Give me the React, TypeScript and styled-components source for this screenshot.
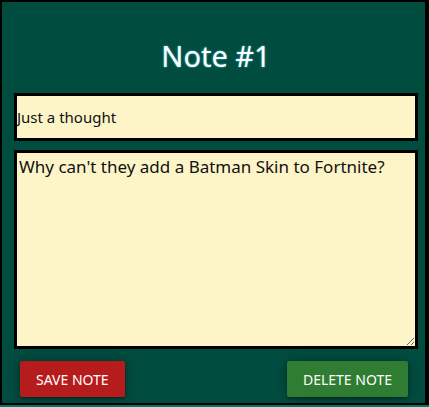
import React from "react";
import styled, { createGlobalStyle } from "styled-components";

const GlobalStyle = createGlobalStyle`
  html, body {
    margin: 0;
    padding: 0;
    background: #00796b;
    height: 407px;
    overflow: hidden;
  }
  * {
    box-sizing: border-box;
  }
`;

const Card = styled.div`
  width: 429px;
  height: 405px;
  background: #004d40;
  border: 2px solid #000;
  border-right-width: 4px;
  padding: 34px 7px 0 12px;
  display: flex;
  flex-direction: column;
  font-family: "Noto Sans", "Open Sans", sans-serif;
`;

const Title = styled.h1`
  margin: 0 0 17px;
  font-size: 29px;
  line-height: 40px;
  font-weight: 400;
  text-align: center;
  color: #fff;
  text-shadow: 0 0 2px #4dd0e1;
`;

const TitleInput = styled.input`
  width: 100%;
  height: 48px;
  margin: 0 0 9px;
  padding: 0;
  border: 3px solid #000;
  background: #fdf5c8;
  font-family: inherit;
  font-size: 15px;
  color: #111;
  outline: none;
`;

const Body = styled.textarea`
  width: 100%;
  height: 199px;
  margin: 0 0 12px;
  padding: 3px 2px;
  border: 3px solid #000;
  background: #fdf5c8;
  font-family: inherit;
  font-size: 17px;
  line-height: 22px;
  color: #111;
  outline: none;
  resize: both;
`;

const Actions = styled.div`
  display: flex;
  justify-content: space-between;
  padding: 0 10px 0 6px;
`;

const Button = styled.button<{ $tone: string }>`
  height: 36px;
  padding: 0 16px;
  border: none;
  border-radius: 2px;
  background: ${(p) => p.$tone};
  color: #fff;
  font-family: inherit;
  font-size: 14px;
  text-transform: uppercase;
  box-shadow: 0 2px 2px 0 rgba(0, 0, 0, 0.14), 0 3px 1px -2px rgba(0, 0, 0, 0.12),
    0 1px 5px 0 rgba(0, 0, 0, 0.2), 0 0 18px rgba(0, 0, 0, 0.25);
  cursor: pointer;
`;

export default function App() {
  return (
    <>
      <GlobalStyle />
      <Card>
        <Title>Note #1</Title>
        <TitleInput defaultValue="Just a thought" />
        <Body defaultValue="Why can't they add a Batman Skin to Fortnite?" />
        <Actions>
          <Button $tone="#b71c1c">Save Note</Button>
          <Button $tone="#2e7d32">Delete Note</Button>
        </Actions>
      </Card>
    </>
  );
}
